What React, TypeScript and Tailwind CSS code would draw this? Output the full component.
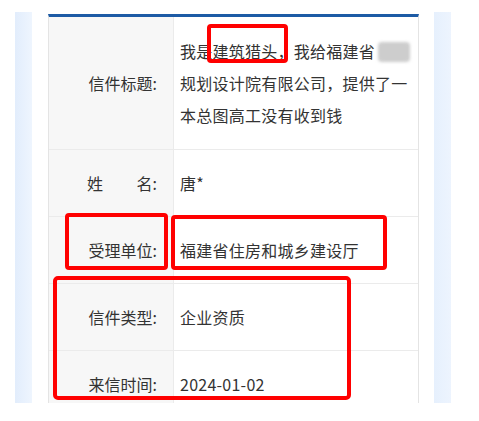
import React from "react";

const font = { fontFamily: '"Noto Sans CJK SC", "Noto Sans", sans-serif' };

function Row({
  label,
  children,
  tall,
  last,
}: {
  label: React.ReactNode;
  children: React.ReactNode;
  tall?: boolean;
  last?: boolean;
}) {
  return (
    <div className={`flex ${last ? "" : "border-b border-[#ebebeb]"}`}>
      <div className="w-[125px] shrink-0 bg-[#f7f7f7] border-r border-[#ebebeb] flex items-center justify-end pr-[16px] text-[16px] leading-[32px] text-[#333]">
        {label}
      </div>
      <div
        className={`flex-1 pl-[6px] pr-[8px] text-[16px] leading-[32px] tracking-[0.25px] text-[#333] ${
          tall ? "py-[18px]" : "py-[17px]"
        }`}
      >
        {children}
      </div>
    </div>
  );
}

export default function App() {
  return (
    <div className="relative w-[479px] h-[421px] bg-white pt-[12px] pl-[15px]" style={font}>
      <div className="flex w-[436px] h-[391px] overflow-hidden">
        <div className="w-[17px] shrink-0 bg-gradient-to-r from-[#e2edfc] to-[#eef5fe]" />
        <div className="w-[402px] shrink-0 bg-white pl-[16px] pr-[15px] pt-[2px]">
          <div className="border-t-[3px] border-[#1d5ba5] border-x border-x-[#e4e4e4]">
            <Row label="信件标题:" tall>
              <div className="whitespace-nowrap">
                我是建筑猎头，我给福建省
                <span className="inline-block align-middle w-[32px] h-[20px] -mt-[4px] ml-[3px] bg-[#cdcdcd] blur-[1.5px] rounded-sm" />
              </div>
              <div className="whitespace-nowrap">规划设计院有限公司，提供了一</div>
              <div>本总图高工没有收到钱</div>
            </Row>
            <Row
              label={
                <span className="flex w-[70px] justify-between">
                  <span>姓</span>
                  <span>名:</span>
                </span>
              }
            >
              唐*
            </Row>
            <Row label="受理单位:">福建省住房和城乡建设厅</Row>
            <Row label="信件类型:">企业资质</Row>
            <Row label="来信时间:" last>
              2024-01-02
            </Row>
          </div>
        </div>
        <div className="w-[17px] shrink-0 bg-gradient-to-r from-[#e6f0fd] to-[#edf4fe]" />
      </div>

      <div className="absolute left-[207px] top-[24px] w-[81px] h-[39px] border-[4px] border-[#ff0000] rounded-[4px]" />
      <div className="absolute left-[65px] top-[213px] w-[103px] h-[57px] border-[4px] border-[#ff0000] rounded-[4px]" />
      <div className="absolute left-[171px] top-[215px] w-[216px] h-[55px] border-[4px] border-[#ff0000] rounded-[4px]" />
      <div className="absolute left-[53px] top-[276px] w-[298px] h-[124px] border-[4px] border-[#ff0000] rounded-[5px]" />
    </div>
  );
}
